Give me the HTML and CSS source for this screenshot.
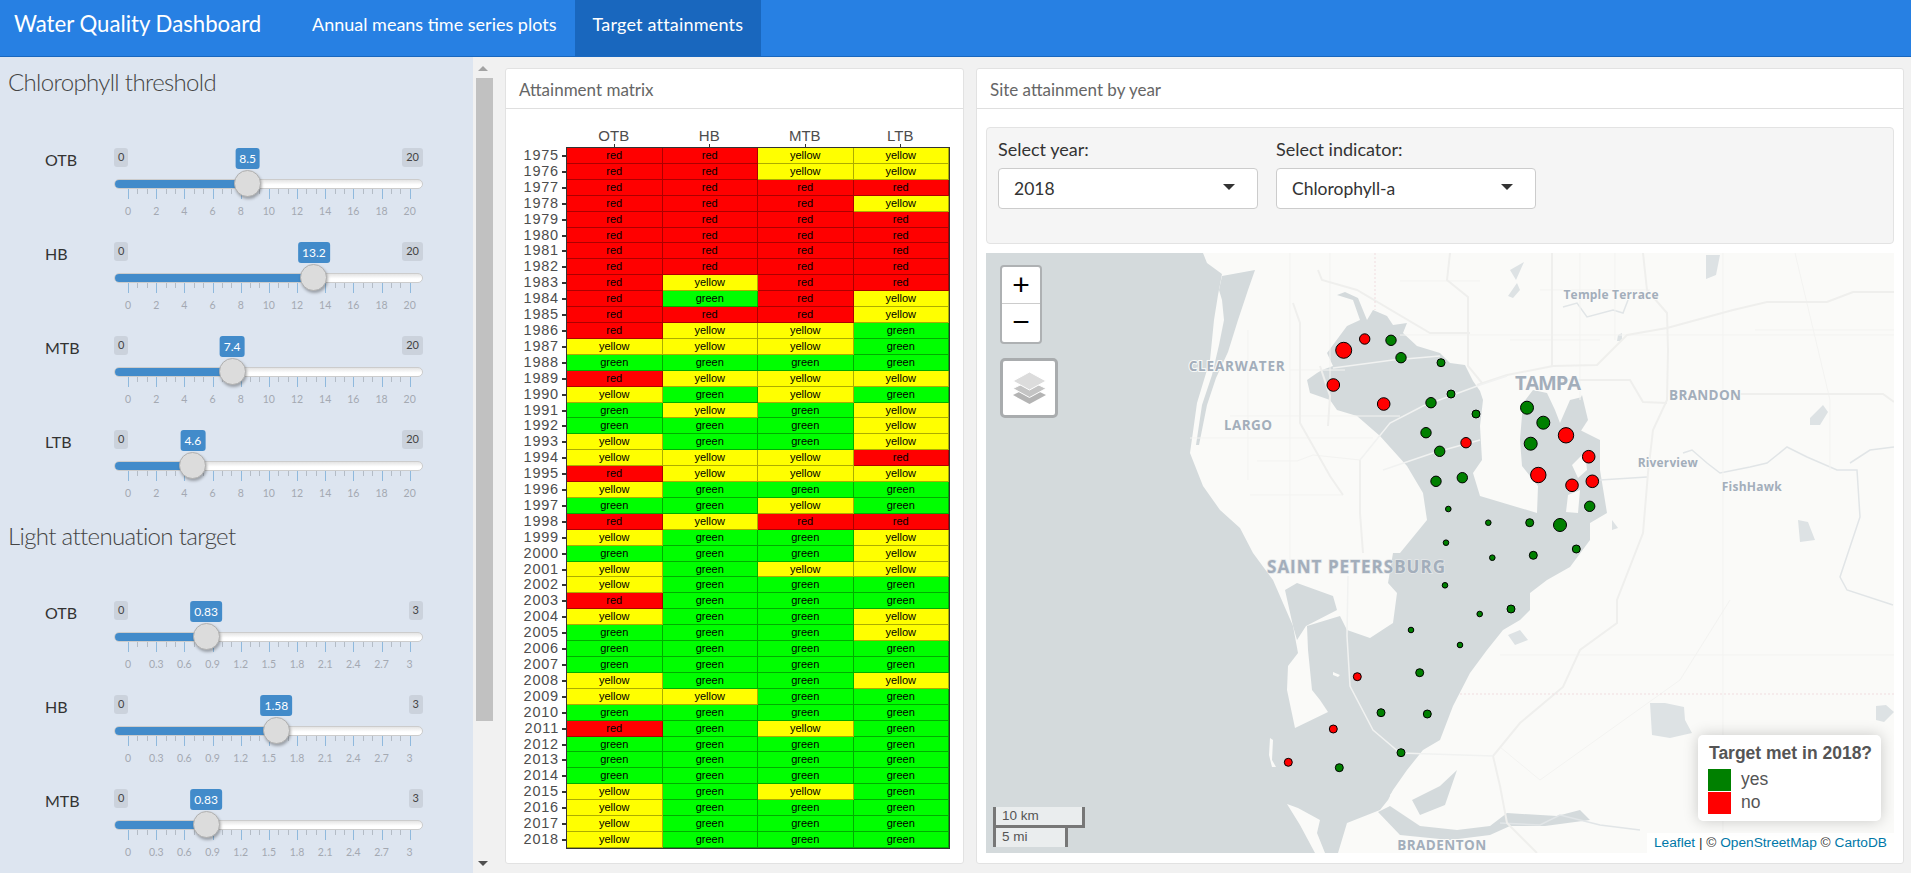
FILE: index.html
```html
<!DOCTYPE html>
<html lang="en">
<head>
<meta charset="utf-8">
<title>Water Quality Dashboard</title>
<link rel="stylesheet" href="styles.css">
</head>
<body>
<nav class="navbar">
  <div class="brand">Water Quality Dashboard</div>
  <a class="tab">Annual means time series plots</a>
  <a class="tab active">Target attainments</a>
</nav>
<div class="page">
  <aside class="sidebar">
    <h2 class="section-title first">Chlorophyll threshold</h2>
    <div class="rows">
      <div class="row"><label class="row-label">OTB</label><div class="slider">
        <div class="ends"><span>0</span><span>20</span></div>
        <div class="track"><div class="fill" style="width:133.7px"></div></div>
        <div class="ticks"></div>
        <div class="scale"><span>0</span><span>2</span><span>4</span><span>6</span><span>8</span><span>10</span><span>12</span><span>14</span><span>16</span><span>18</span><span>20</span></div>
        <b class="value" style="left:133.7px">8.5</b><i class="handle" style="left:133.7px"></i>
      </div></div>
      <div class="row"><label class="row-label">HB</label><div class="slider">
        <div class="ends"><span>0</span><span>20</span></div>
        <div class="track"><div class="fill" style="width:199.9px"></div></div>
        <div class="ticks"></div>
        <div class="scale"><span>0</span><span>2</span><span>4</span><span>6</span><span>8</span><span>10</span><span>12</span><span>14</span><span>16</span><span>18</span><span>20</span></div>
        <b class="value" style="left:199.9px">13.2</b><i class="handle" style="left:199.9px"></i>
      </div></div>
      <div class="row"><label class="row-label">MTB</label><div class="slider">
        <div class="ends"><span>0</span><span>20</span></div>
        <div class="track"><div class="fill" style="width:118.2px"></div></div>
        <div class="ticks"></div>
        <div class="scale"><span>0</span><span>2</span><span>4</span><span>6</span><span>8</span><span>10</span><span>12</span><span>14</span><span>16</span><span>18</span><span>20</span></div>
        <b class="value" style="left:118.2px">7.4</b><i class="handle" style="left:118.2px"></i>
      </div></div>
      <div class="row"><label class="row-label">LTB</label><div class="slider">
        <div class="ends"><span>0</span><span>20</span></div>
        <div class="track"><div class="fill" style="width:78.8px"></div></div>
        <div class="ticks"></div>
        <div class="scale"><span>0</span><span>2</span><span>4</span><span>6</span><span>8</span><span>10</span><span>12</span><span>14</span><span>16</span><span>18</span><span>20</span></div>
        <b class="value" style="left:78.8px">4.6</b><i class="handle" style="left:78.8px"></i>
      </div></div>
    </div>
    <h2 class="section-title second">Light attenuation target</h2>
    <div class="rows">
      <div class="row"><label class="row-label">OTB</label><div class="slider">
        <div class="ends"><span>0</span><span>3</span></div>
        <div class="track"><div class="fill" style="width:92px"></div></div>
        <div class="ticks"></div>
        <div class="scale"><span>0</span><span>0.3</span><span>0.6</span><span>0.9</span><span>1.2</span><span>1.5</span><span>1.8</span><span>2.1</span><span>2.4</span><span>2.7</span><span>3</span></div>
        <b class="value" style="left:92px">0.83</b><i class="handle" style="left:92px"></i>
      </div></div>
      <div class="row"><label class="row-label">HB</label><div class="slider">
        <div class="ends"><span>0</span><span>3</span></div>
        <div class="track"><div class="fill" style="width:162.4px"></div></div>
        <div class="ticks"></div>
        <div class="scale"><span>0</span><span>0.3</span><span>0.6</span><span>0.9</span><span>1.2</span><span>1.5</span><span>1.8</span><span>2.1</span><span>2.4</span><span>2.7</span><span>3</span></div>
        <b class="value" style="left:162.4px">1.58</b><i class="handle" style="left:162.4px"></i>
      </div></div>
      <div class="row"><label class="row-label">MTB</label><div class="slider">
        <div class="ends"><span>0</span><span>3</span></div>
        <div class="track"><div class="fill" style="width:92px"></div></div>
        <div class="ticks"></div>
        <div class="scale"><span>0</span><span>0.3</span><span>0.6</span><span>0.9</span><span>1.2</span><span>1.5</span><span>1.8</span><span>2.1</span><span>2.4</span><span>2.7</span><span>3</span></div>
        <b class="value" style="left:92px">0.83</b><i class="handle" style="left:92px"></i>
      </div></div>
    </div>
  </aside>
  <div class="scrollbar"><i class="arrow-up"></i><div class="thumb"></div><i class="arrow-down"></i></div>
  <main class="content">
    <section class="card matrix-card">
      <header class="card-head">Attainment matrix</header>
      <div class="plot">
        <div class="plot-head"><span>OTB</span><span>HB</span><span>MTB</span><span>LTB</span></div>
        <div class="plot-body">
          <div class="years"><span>1975</span><span>1976</span><span>1977</span><span>1978</span><span>1979</span><span>1980</span><span>1981</span><span>1982</span><span>1983</span><span>1984</span><span>1985</span><span>1986</span><span>1987</span><span>1988</span><span>1989</span><span>1990</span><span>1991</span><span>1992</span><span>1993</span><span>1994</span><span>1995</span><span>1996</span><span>1997</span><span>1998</span><span>1999</span><span>2000</span><span>2001</span><span>2002</span><span>2003</span><span>2004</span><span>2005</span><span>2006</span><span>2007</span><span>2008</span><span>2009</span><span>2010</span><span>2011</span><span>2012</span><span>2013</span><span>2014</span><span>2015</span><span>2016</span><span>2017</span><span>2018</span></div>
          <div class="cells">
<span class="r">red</span><span class="r">red</span><span class="y">yellow</span><span class="y">yellow</span>
<span class="r">red</span><span class="r">red</span><span class="y">yellow</span><span class="y">yellow</span>
<span class="r">red</span><span class="r">red</span><span class="r">red</span><span class="r">red</span>
<span class="r">red</span><span class="r">red</span><span class="r">red</span><span class="y">yellow</span>
<span class="r">red</span><span class="r">red</span><span class="r">red</span><span class="r">red</span>
<span class="r">red</span><span class="r">red</span><span class="r">red</span><span class="r">red</span>
<span class="r">red</span><span class="r">red</span><span class="r">red</span><span class="r">red</span>
<span class="r">red</span><span class="r">red</span><span class="r">red</span><span class="r">red</span>
<span class="r">red</span><span class="y">yellow</span><span class="r">red</span><span class="r">red</span>
<span class="r">red</span><span class="g">green</span><span class="r">red</span><span class="y">yellow</span>
<span class="r">red</span><span class="r">red</span><span class="r">red</span><span class="y">yellow</span>
<span class="r">red</span><span class="y">yellow</span><span class="y">yellow</span><span class="g">green</span>
<span class="y">yellow</span><span class="y">yellow</span><span class="y">yellow</span><span class="g">green</span>
<span class="g">green</span><span class="g">green</span><span class="g">green</span><span class="g">green</span>
<span class="r">red</span><span class="y">yellow</span><span class="y">yellow</span><span class="y">yellow</span>
<span class="y">yellow</span><span class="g">green</span><span class="y">yellow</span><span class="g">green</span>
<span class="g">green</span><span class="y">yellow</span><span class="g">green</span><span class="y">yellow</span>
<span class="g">green</span><span class="g">green</span><span class="g">green</span><span class="y">yellow</span>
<span class="y">yellow</span><span class="g">green</span><span class="g">green</span><span class="y">yellow</span>
<span class="y">yellow</span><span class="y">yellow</span><span class="y">yellow</span><span class="r">red</span>
<span class="r">red</span><span class="y">yellow</span><span class="y">yellow</span><span class="y">yellow</span>
<span class="y">yellow</span><span class="g">green</span><span class="g">green</span><span class="g">green</span>
<span class="g">green</span><span class="g">green</span><span class="y">yellow</span><span class="g">green</span>
<span class="r">red</span><span class="y">yellow</span><span class="r">red</span><span class="r">red</span>
<span class="y">yellow</span><span class="g">green</span><span class="g">green</span><span class="y">yellow</span>
<span class="g">green</span><span class="g">green</span><span class="g">green</span><span class="y">yellow</span>
<span class="y">yellow</span><span class="g">green</span><span class="y">yellow</span><span class="y">yellow</span>
<span class="y">yellow</span><span class="g">green</span><span class="g">green</span><span class="g">green</span>
<span class="r">red</span><span class="g">green</span><span class="g">green</span><span class="g">green</span>
<span class="y">yellow</span><span class="g">green</span><span class="g">green</span><span class="y">yellow</span>
<span class="g">green</span><span class="g">green</span><span class="g">green</span><span class="y">yellow</span>
<span class="g">green</span><span class="g">green</span><span class="g">green</span><span class="g">green</span>
<span class="g">green</span><span class="g">green</span><span class="g">green</span><span class="g">green</span>
<span class="y">yellow</span><span class="g">green</span><span class="g">green</span><span class="y">yellow</span>
<span class="y">yellow</span><span class="y">yellow</span><span class="g">green</span><span class="g">green</span>
<span class="g">green</span><span class="g">green</span><span class="g">green</span><span class="g">green</span>
<span class="r">red</span><span class="g">green</span><span class="y">yellow</span><span class="g">green</span>
<span class="g">green</span><span class="g">green</span><span class="g">green</span><span class="g">green</span>
<span class="g">green</span><span class="g">green</span><span class="g">green</span><span class="g">green</span>
<span class="g">green</span><span class="g">green</span><span class="g">green</span><span class="g">green</span>
<span class="y">yellow</span><span class="g">green</span><span class="y">yellow</span><span class="g">green</span>
<span class="y">yellow</span><span class="g">green</span><span class="g">green</span><span class="g">green</span>
<span class="y">yellow</span><span class="g">green</span><span class="g">green</span><span class="g">green</span>
<span class="y">yellow</span><span class="g">green</span><span class="g">green</span><span class="g">green</span>
          </div>
        </div>
      </div>
    </section>
    <section class="card map-card">
      <header class="card-head">Site attainment by year</header>
      <div class="map-body">
        <form class="well">
          <div class="field"><label>Select year:</label><div class="select">2018<i class="caret"></i></div></div>
          <div class="field"><label>Select indicator:</label><div class="select">Chlorophyll-a<i class="caret"></i></div></div>
        </form>
        <div class="map">
          <svg class="basemap" viewBox="986 253 908 600" width="908" height="600">
            <rect class="land" x="986" y="253" width="908" height="600"/>
            <path class="water" d="M986 253H1203L1207 263 1222 274 1218 295 1214 320 1210 360 1197 403 1190 453 1203 486 1220 510 1240 528 1253 553 1273 580 1293 626 1298 653 1288 666 1287 690 1295 728 1328 712 1320 700 1312 690 1308 650 1307 626 1340 616 1347 630 1370 638 1393 623 1397 593 1388 583 1393 553 1400 553 1427 520 1423 493 1407 466 1380 436 1357 416 1337 410 1330 400 1310 393 1307 380 1317 373 1322 370 1333 366 1327 353 1347 326 1360 320 1353 300 1337 295 1345 292 1358 298 1367 320 1373 310 1387 316 1393 325 1407 323 1403 333 1417 346 1440 353 1450 363 1465 365 1473 381 1480 391 1483 400 1480 426 1482 460 1473 473 1480 496 1537 513 1538 486 1522 466 1520 440 1523 403 1533 390 1547 393 1555 410 1560 423 1570 400 1582 397 1580 430 1600 440 1600 470 1607 513 1590 523 1590 540 1570 567 1547 580 1530 593 1530 610 1520 620 1503 630 1487 650 1470 673 1453 706 1440 740 1423 750 1407 770 1393 790 1388 800 1380 810 1347 823 1338 853H986Z"/>
            <path class="water" d="M1222 276 1255 270 1248 290 1238 320 1228 352 1216 378 1207 405 1199 445 1196 445 1202 405 1212 375 1219 345 1224 320 1222 300 1219 290Z"/>
            <path class="water" d="M1297 583 1333 596 1337 610 1306 626 1297 640 1293 626 1285 590Z"/>
            <path class="land" d="M1287 804 1298 808 1320 820 1317 833 1325 853H1315L1300 825Z"/>
            <path class="land" d="M1270 738 1273 740 1272 760 1276 767 1272 767 1269 755Z"/>
            <path class="land" d="M1333 672 1340 675 1338 677 1333 675Z"/>
            <path class="land" d="M1390 795 1405 775 1432 762 1445 770 1420 795 1400 812Z"/>
            <path class="water" d="M1412 800 1440 786 1457 770 1445 805 1420 815ZM1390 806 1420 826 1457 830 1490 826 1507 813 1557 816 1580 810 1590 820 1545 826 1510 826 1490 835 1450 840 1400 835 1378 812Z"/>
            <path class="water" d="M1570 420 1582 395 1588 420 1575 440Z"/>
            <path class="land" d="M1572 465 1585 452 1587 470 1578 478ZM1568 495 1580 490 1578 513 1566 512Z"/>
            <path class="water soft" d="M1650 703 1665 703 1684 707 1685 720 1692 733 1670 738 1652 735ZM1876 706 1886 705 1894 712 1884 722 1876 720ZM1706 255 1720 255 1716 275 1706 279ZM1810 418 1823 405 1828 412 1820 425 1810 425ZM1798 520 1808 522 1815 540 1800 542ZM1618 335 1622 333 1622 341 1617 341ZM1612 520 1618 528 1612 530ZM1508 296 1517 283 1520 290 1513 298ZM1510 270 1524 262 1516 280ZM1508 635 1520 630 1528 640 1515 645Z"/>
            <path class="river" d="M1683 453 1692 450 1707 463 1720 473 1750 467 1767 463 1787 447 1807 457 1837 470 1857 470 1860 517 1840 577 1847 590 1893 605M1850 463 1870 450 1894 447M1600 480 1647 477M1563 307 1577 303 1587 317 1613 310 1623 313 1628 300M1500 823 1540 825 1560 815 1600 825 1640 830"/>
            <path class="minor" d="M1400 335H1894M1723 253V853M1500 655H1894M1190 438H1373M1250 495H1343M1257 461H1297L1313 455 1360 460M1230 416H1400M1290 253V560M1248 330V480M1330 253V380M1540 290H1650M1510 340H1600M1290 370H1345M1400 281H1480M1755 330H1894M1500 747 1540 780 1680 680 1730 600M1615 253V340M1580 253V400M1795 253 1830 400V470"/>
            <path class="road" d="M1643 253 1647 290 1667 313 1668 350 1667 400 1653 430 1648 473 1643 533 1617 600 1617 623 1580 650 1563 687 1520 723 1493 756 1500 786 1507 823 1537 853M1477 385 1507 375 1553 366 1597 365 1627 335 1667 328 1733 310 1767 302 1827 302 1853 292 1894 292M1552 253V367M1450 253 1447 280 1468 297 1468 366 1482 383M1553 380H1630L1643 402 1667 403M1740 394H1883L1894 402M1293 303 1300 323 1300 423 1330 476 1343 495M1360 460 1360 513 1363 553M1320 366 1330 396 1328 426M1318 270 1322 280 1357 290 1430 333 1470 333"/>
            <path class="bridge" d="M1348 576 1347 636 1350 686 1373 730 1400 753 1493 756M1333 368 1393 360 1440 356M1360 460 1390 423 1423 406 1480 385 1507 376M1383 470 1433 453 1480 440"/>
            <path class="county" d="M1375 253V310M1460 694H1894"/>
            <text class="label s" x="1270" y="252" textLength="76">Palm Harbor</text>
            <text class="label" x="1236.7" y="371" textLength="96">CLEARWATER</text>
            <text class="label" x="1248" y="429.5" textLength="48">LARGO</text>
            <text class="label big" x="1548" y="390" textLength="66">TAMPA</text>
            <text class="label" x="1705" y="399.500" textLength="72">BRANDON</text>
            <text class="label s" x="1611" y="298.500" textLength="95">Temple Terrace</text>
            <text class="label s" x="1667.7" y="467" textLength="60">Riverview</text>
            <text class="label s" x="1751.7" y="490.500" textLength="60">FishHawk</text>
            <text class="label mid" x="1356" y="573" textLength="178">SAINT PETERSBURG</text>
            <text class="label" x="1441.7" y="850" textLength="89">BRADENTON</text>
            <g class="site no">
              <circle cx="1343.7" cy="350.3" r="8"/><circle cx="1364.7" cy="339" r="5.2"/><circle cx="1333.3" cy="385" r="6.3"/><circle cx="1383.7" cy="404" r="6.3"/><circle cx="1466" cy="442.7" r="5.2"/><circle cx="1538.3" cy="475" r="7.7"/><circle cx="1566" cy="435.3" r="7.7"/><circle cx="1588.7" cy="456.7" r="6.3"/><circle cx="1592.3" cy="481.3" r="6.3"/><circle cx="1572" cy="485.3" r="6.3"/><circle cx="1357.3" cy="676.7" r="4"/><circle cx="1333.3" cy="729" r="4"/><circle cx="1288.3" cy="762.3" r="4"/>
            </g>
            <g class="site yes">
              <circle cx="1391" cy="340.3" r="5.2"/><circle cx="1401" cy="357.7" r="5.2"/><circle cx="1441" cy="362.7" r="4"/><circle cx="1451" cy="394" r="4"/><circle cx="1431" cy="402.7" r="5.2"/><circle cx="1476" cy="414" r="4"/><circle cx="1426" cy="432.7" r="5.2"/><circle cx="1439.7" cy="451.3" r="5.2"/><circle cx="1436" cy="481.3" r="5.2"/><circle cx="1462.3" cy="477.7" r="5.2"/><circle cx="1448.3" cy="509" r="2.8"/><circle cx="1488.3" cy="522.7" r="2.8"/><circle cx="1529.7" cy="522.7" r="4"/><circle cx="1446" cy="542.7" r="2.8"/><circle cx="1527" cy="407.7" r="6.5"/><circle cx="1543.3" cy="422.7" r="6.5"/><circle cx="1530.7" cy="443.7" r="6.5"/><circle cx="1589.7" cy="506.3" r="5.2"/><circle cx="1560" cy="525" r="6.5"/><circle cx="1576.3" cy="549" r="4"/><circle cx="1533.3" cy="555.3" r="4"/><circle cx="1492.3" cy="557.7" r="2.8"/><circle cx="1445" cy="585.3" r="2.8"/><circle cx="1511" cy="609" r="4"/><circle cx="1479.7" cy="614" r="2.8"/><circle cx="1411" cy="630" r="2.8"/><circle cx="1460" cy="645" r="2.8"/><circle cx="1419.7" cy="672.7" r="4"/><circle cx="1381" cy="712.7" r="4"/><circle cx="1427.3" cy="714" r="4"/><circle cx="1401" cy="752.7" r="4"/><circle cx="1339.3" cy="767.7" r="4"/>
            </g>
          </svg>
          <div class="controls">
            <div class="zoom"><a>+</a><a class="minus">&#8722;</a></div>
            <div class="layers">
              <svg viewBox="0 0 33 32" width="33" height="32">
                <path d="M16.500 15 33 23 16.500 32 0 23Z" fill="#b4b4b4"/>
                <path d="M16.500 8.500 33 16.500 16.500 25.500 0 16.500Z" fill="#c4c4c4" stroke="#fff" stroke-width="1"/>
                <path d="M16.500 0 33 9 16.500 18 0 9Z" fill="#dcdcdc" stroke="#fff" stroke-width="1"/>
              </svg>
            </div>
          </div>
          <div class="map-scale"><div class="km">10 km</div><div class="mi">5 mi</div></div>
          <div class="legend">
            <strong>Target met in 2018?</strong>
            <div class="legend-row"><i class="sw yes"></i><span>yes</span></div>
            <div class="legend-row"><i class="sw no"></i><span>no</span></div>
          </div>
          <div class="attribution"><a>Leaflet</a> | © <a>OpenStreetMap</a> © <a>CartoDB</a></div>
        </div>
      </div>
    </section>
  </main>
</div>
</body>
</html>
```
FILE: styles.css
```css
* { box-sizing: border-box; }
html, body { margin: 0; height: 873px; overflow: hidden; }
body { font-family: "Lato", "Noto Sans", sans-serif; background: #f1f1f1; color: #333; }

.navbar { height: 57px; background: #2780e3; border-bottom: 1px solid #1967be; display: flex; align-items: stretch; color: #fff; }
.brand { font-size: 22.200px; line-height: 48px; padding-left: 14px; width: 294px; white-space: nowrap; }
.tab { font-size: 18px; line-height: 48px; padding: 0 18px; color: #fff; white-space: nowrap; height: 56px; }
.tab.active { background: #1967be; letter-spacing: .2px; }

.page { display: flex; height: 816px; }
.sidebar { width: 473px; flex: none; background: #dde5f0; overflow: hidden; }
.section-title { margin: 0; font-weight: 300; font-size: 24px; letter-spacing: -.65px; line-height: 30px; color: #444; white-space: nowrap; padding-left: 8px; }
.section-title.first { margin-top: 10px; margin-bottom: 51px; }
.section-title.second { margin-top: 13px; margin-bottom: 50px; }
.rows { display: flex; flex-direction: column; gap: 16px; }
.row { display: flex; height: 78px; padding-left: 45px; }
.row-label { width: 69px; font-size: 16px; line-height: 24px; color: #333; }
.slider { position: relative; width: 309px; }
.ends { display: flex; justify-content: space-between; height: 19px; }
.ends span { background: #cbd2dc; border-radius: 3px; padding: 0 4px; min-width: 14px; font-size: 11px; line-height: 18px; text-align: center; color: #444; }
.track { height: 10px; margin-top: 12px; border: 1px solid #ccc; border-radius: 5px; background: linear-gradient(#e4e4e4, #fff 60%); overflow: hidden; }
.fill { height: 10px; margin: -1px; background: #428bca; }
.ticks { height: 10px; margin-left: 14px; width: 283px;
  background-image: repeating-linear-gradient(90deg, #8fb9dd 0 1px, transparent 1px 28.17px), repeating-linear-gradient(90deg, #b4bcc6 0 1px, transparent 1px 9.39px);
  background-size: 100% 10px, 100% 5px; background-repeat: no-repeat; }
.scale { display: grid; grid-template-columns: repeat(11, 28.17px); margin-top: 6px; font-size: 10.500px; line-height: 12px; color: #a4a9b2; text-align: center; }
.value { position: absolute; top: 0; transform: translateX(-50%); background: #428bca; color: #fff; font-weight: 400; font-size: 12px; line-height: 21px; height: 21px; padding: 0 4px; border-radius: 3px; }
.handle { position: absolute; top: 22px; width: 27px; height: 27px; margin-left: -13.500px; border-radius: 50%; background: #dcdcdc; border: 1px solid #b0b0b0; box-shadow: 1px 2px 3px rgba(0,0,0,.3); }

.scrollbar { width: 21px; flex: none; background: #f1f1f1; position: relative; display: flex; flex-direction: column; align-items: center; }
.thumb { width: 17px; height: 643px; margin-top: 21px; margin-left: 1px; background: #c1c1c1; }
.arrow-up, .arrow-down { position: absolute; left: 5px; width: 0; height: 0; border-left: 5px solid transparent; border-right: 5px solid transparent; }
.arrow-up { top: 9px; border-bottom: 5px solid #a3a3a3; }
.arrow-down { bottom: 7px; border-top: 5px solid #505050; }

.content { flex: 1; display: flex; gap: 12px; padding: 11px 7px 9px 11px; min-width: 0; }
.card { background: #fff; border: 1px solid #e2e2e2; border-radius: 3px; display: flex; flex-direction: column; }
.matrix-card { width: 459px; flex: none; }
.map-card { flex: 1; min-width: 0; }
.card-head { height: 40px; border-bottom: 1px solid #dfdfdf; padding-left: 13px; font-size: 17px; line-height: 41px; color: #666; flex: none; }

.plot { padding: 18px 0 0 2px; font-family: "Liberation Sans", Arial, sans-serif; }
.plot-head { display: grid; grid-template-columns: repeat(4, 95.500px); margin-left: 58px; height: 20px; color: #4d4d4d; font-size: 15px; line-height: 17px; text-align: center; }
.plot-head span { position: relative; }
.plot-head span::after { content: ""; position: absolute; left: 50%; bottom: 0; width: 1px; height: 3px; background: #333; }
.plot-body { display: flex; }
.years { width: 58px; flex: none; display: grid; grid-auto-rows: 15.910px; padding-top: 1px; color: #4d4d4d; font-size: 14.500px; letter-spacing: .8px; text-align: right; }
.years span { position: relative; padding-right: 7px; line-height: 15px; }
.years span::after { content: ""; position: absolute; right: 0; top: 7px; width: 4px; height: 2px; background: #333; }
.cells { display: grid; grid-template-columns: repeat(4, 95.500px); grid-auto-rows: 15.910px; width: 384px; border: 1px solid #333; font-size: 11px; line-height: 15px; text-align: center; color: #000; }
.cells span { border-right: 1px solid rgba(0,0,0,.32); border-bottom: 1px solid rgba(0,0,0,.32); }
.cells .r { background: #f00; }
.cells .y { background: #ff0; }
.cells .g { background: #0f0; }

.map-body { padding: 18px 9px 0 9px; display: flex; flex-direction: column; }
.well { height: 117px; border: 1px solid #e3e3e3; border-radius: 4px; background: #f5f5f5; padding: 9px 0 0 11px; display: flex; gap: 18px; flex: none; }
.field { width: 260px; }
.field label { display: block; font-size: 18px; line-height: 24px; color: #333; margin-bottom: 7px; }
.select { position: relative; height: 41px; border: 1px solid #ccc; border-radius: 4px; background: #fff; padding-left: 15px; font-size: 17.500px; line-height: 40px; color: #333; }
.caret { position: absolute; right: 22px; top: 15px; width: 0; height: 0; border-left: 6px solid transparent; border-right: 6px solid transparent; border-top: 6px solid #333; }

.map { position: relative; margin-top: 9px; width: 908px; height: 600px; overflow: hidden; flex: none; font-family: "Liberation Sans", Arial, sans-serif; }
.basemap { display: block; }
.land { fill: #fafaf8; }
.water { fill: #d4dadc; }
.water.soft { fill: #dde2e4; }
.river { fill: none; stroke: #e1e5e7; stroke-width: 1.500; }
.minor { fill: none; stroke: #f3f3f1; stroke-width: 1; }
.road { fill: none; stroke: #efefed; stroke-width: 2; }
.bridge { fill: none; stroke: #f1f2f1; stroke-width: 1.500; }
.county { fill: none; stroke: #f0dcdf; stroke-width: 1; stroke-dasharray: 2 2; }
.label { font-family: "Open Sans", sans-serif; font-weight: 700; font-size: 13.500px; fill: #a3aebb; text-anchor: middle; stroke: #fafaf8; stroke-width: 2px; paint-order: stroke; }
.label.s { font-size: 12px; }
.label.mid { font-size: 17px; stroke: #e4e7e8; stroke-width: 1.500px; }
.label.big { font-size: 20px; }
.site circle { stroke: #000; stroke-width: 1; }
.site.no circle { fill: #f00; }
.site.yes circle { fill: #008000; }

.controls { position: absolute; left: 14px; top: 12px; display: flex; flex-direction: column; gap: 14px; align-items: flex-start; }
.zoom { width: 42px; height: 79px; border: 2px solid #aeb1b3; border-radius: 4px; background: #fff; display: flex; flex-direction: column; color: #000; }
.zoom a { height: 37px; font-size: 30px; line-height: 36px; text-align: center; font-weight: 400; border-bottom: 1px solid #ccc; }
.zoom a.minus { border-bottom: 0; }
.layers { width: 58px; height: 60px; border: 3px solid #a9acae; border-radius: 5px; background: #fff; display: flex; align-items: center; justify-content: center; }
.map-scale { position: absolute; left: 7px; bottom: 6px; color: #555; font-size: 13.500px; }
.map-scale div { background: rgba(255,255,255,.5); line-height: 17px; padding-left: 6px; border: 3px solid #777; }
.km { width: 92px; height: 21px; border-top: 0 !important; }
.mi { width: 75px; height: 19px; border-top: 0 !important; border-bottom: 0 !important; }
.legend { position: absolute; right: 13px; bottom: 32px; width: 183px; height: 86px; background: #fff; border-radius: 5px; box-shadow: 0 0 15px rgba(0,0,0,.2); padding: 9px 10px; color: #555; font-size: 17.500px; }
.legend strong { display: block; font-size: 17.500px; line-height: 18px; margin: 0 0 6px 1px; white-space: nowrap; }
.legend-row { display: flex; height: 23px; align-items: center; gap: 10px; }
.sw { width: 23px; height: 22px; }
.sw.yes { background: #008000; }
.sw.no { background: #f00; }
.attribution { position: absolute; right: 0; bottom: 0; background: rgba(255,255,255,.85); font-size: 13.700px; line-height: 20px; padding: 0 7px; color: #333; white-space: nowrap; }
.attribution a { color: #0078a8; }
```
